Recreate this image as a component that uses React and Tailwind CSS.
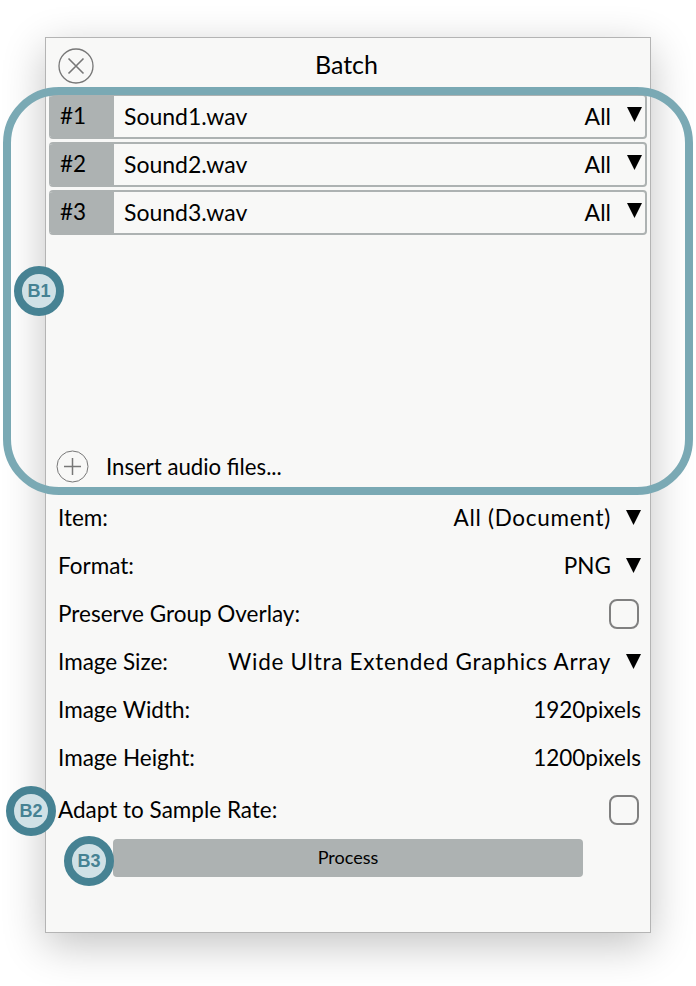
const font = { fontFamily: '"Lato", "Noto Sans", sans-serif' };

const files = [
  { id: "#1", name: "Sound1.wav" },
  { id: "#2", name: "Sound2.wav" },
  { id: "#3", name: "Sound3.wav" },
];

const Arrow = () => (
  <svg width="15" height="15" viewBox="0 0 15 15" className="shrink-0">
    <path d="M0 0 H15 L7.5 15 Z" fill="#000" />
  </svg>
);

const Badge = ({ label, className }) => (
  <div className={`absolute flex h-[50px] w-[50px] items-center justify-center rounded-full border-[8px] border-[#468293] bg-[#d0e1e6] text-[18px] font-bold text-[#468293] [font-family:'Liberation_Sans',sans-serif] ${className}`}>
    {label}
  </div>
);

const FileRow = ({ id, name }) => (
  <div className="flex h-[45px] overflow-hidden rounded border-2 border-l-0 border-[#adb2b2]">
    <div className="flex w-[65px] items-center bg-[#adb2b2] pb-[1px] pl-[11px] text-[22.5px] text-black">{id}</div>
    <div className="flex flex-1 items-center pb-[1px] pl-[10px] text-[23px] text-black">{name}</div>
    <div className="flex items-start pt-[11px] pr-[3px]">
      <span className="mr-[16px] mt-[-4px] text-[23px] leading-[26px] text-black">All</span>
      <Arrow />
    </div>
  </div>
);

const SettingRow = ({ label, value, wide, arrow, check, className = "h-[48px]" }) => (
  <div className={`flex items-center justify-between pl-[12px] pr-[9px] text-[22.5px] text-black ${className}`}>
    <span>{label}</span>
    {value && (
      <span className="flex items-center">
        <span className={wide ? "tracking-[0.72px]" : ""}>{value}</span>
        {arrow && <span className="ml-[15px] mb-[2px] flex"><Arrow /></span>}
      </span>
    )}
    {check && <span className="mr-[2px] h-[30px] w-[30px] rounded-lg border-2 border-[#808080]" />}
  </div>
);

export default function App() {
  return (
    <div className="relative h-[986px] w-[696px] overflow-hidden bg-white" style={font}>
      <div className="ml-[45px] pt-[37px]">
        <div className="h-[896px] w-[606px] border border-[#b4b4b4] bg-[#f8f8f7] shadow-[0_12px_40px_rgba(0,0,0,0.24)]">
          <div className="relative flex h-[56px] items-center justify-center pr-[3px] pb-[2px] text-[25px] text-black">
            <span className="absolute left-[12px] top-[10px] flex">
              <svg width="36" height="36" viewBox="0 0 36 36" fill="none" stroke="#777">
                <circle cx="18" cy="18" r="17" strokeWidth="1.3" />
                <path d="M10.5 10.5 L25.5 25.5 M25.5 10.5 L10.5 25.5" strokeWidth="1.6" />
              </svg>
            </span>
            Batch
          </div>

          <div className="flex h-[397px] flex-col border-b-2 border-[#adb2b2] px-[3px]">
            <div className="flex flex-1 flex-col gap-[3px]">
              {files.map((file) => (
                <FileRow key={file.id} {...file} />
              ))}
            </div>
            <div className="flex h-[44px] items-center pl-[7px] text-[22.2px] text-black">
              <svg width="33" height="33" viewBox="0 0 33 33" fill="none" stroke="#777" className="mr-[17px] mb-[1px] shrink-0">
                <circle cx="16.5" cy="16.5" r="15.5" strokeWidth="1" />
                <path d="M8 16.5 H25 M16.5 8 V25" strokeWidth="1.5" />
              </svg>
              Insert audio files...
            </div>
          </div>

          <div className="pt-[3px]">
            <SettingRow label="Item:" value="All (Document)" wide arrow />
            <SettingRow label="Format:" value="PNG" arrow />
            <SettingRow label="Preserve Group Overlay:" check />
            <SettingRow label="Image Size:" value="Wide Ultra Extended Graphics Array" wide arrow />
            <SettingRow label="Image Width:" value="1920pixels" />
            <SettingRow label="Image Height:" value="1200pixels" />
            <SettingRow label="Adapt to Sample Rate:" check className="mt-[4px] h-[48px]" />
          </div>

          <button type="button" className="ml-[67px] mt-[5px] block h-[38px] w-[470px] rounded bg-[#adb2b2] pb-[1px] text-[18px] text-black">
            Process
          </button>
        </div>
      </div>

      <div className="absolute left-[3px] top-[87px] h-[408px] w-[690px] rounded-[56px] border-[8px] border-[#7aa9b4]" />
      <Badge label="B1" className="left-[14px] top-[266px]" />
      <Badge label="B2" className="left-[6px] top-[786px]" />
      <Badge label="B3" className="left-[64px] top-[836px]" />
    </div>
  );
}
